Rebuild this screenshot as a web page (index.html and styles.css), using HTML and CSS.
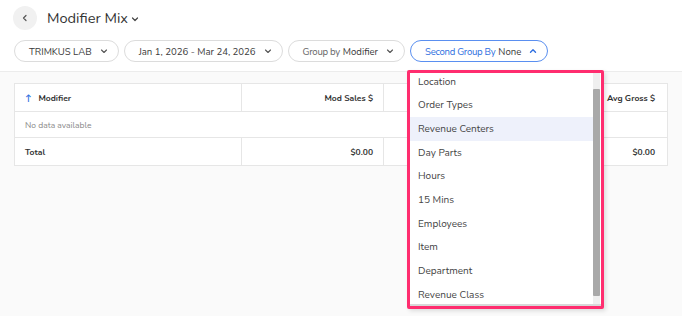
FILE: index.html
```html
<!DOCTYPE html>
<html>
<head>
<meta charset="utf-8">
<link rel="stylesheet" href="styles.css">
</head>
<body>
<header class="header">
  <div class="title-row">
    <button class="back"><svg width="8" height="8" viewBox="0 0 8 8"><path d="M5 1.5 L2.5 4 L5 6.5" fill="none" stroke="#555" stroke-width="1.2" stroke-linecap="round" stroke-linejoin="round"/></svg></button>
    <h1 class="title">Modifier Mix</h1>
    <svg class="title-chev" width="8" height="8" viewBox="0 0 8 8"><path d="M1.5 3 L4 5.5 L6.5 3" fill="none" stroke="#444" stroke-width="1.2" stroke-linecap="round" stroke-linejoin="round"/></svg>
  </div>
  <div class="filters">
    <div class="pill"><span class="val">TRIMKUS LAB</span><svg class="chev" width="8" height="8" viewBox="0 0 8 8"><path d="M1.5 3 L4 5.5 L6.5 3" fill="none" stroke="#555" stroke-width="1.1" stroke-linecap="round" stroke-linejoin="round"/></svg></div>
    <div class="pill"><span class="val">Jan 1, 2026 - Mar 24, 2026</span><svg class="chev" width="8" height="8" viewBox="0 0 8 8"><path d="M1.5 3 L4 5.5 L6.5 3" fill="none" stroke="#555" stroke-width="1.1" stroke-linecap="round" stroke-linejoin="round"/></svg></div>
    <div class="pill"><span class="lbl">Group by</span><span class="val">Modifier</span><svg class="chev" width="8" height="8" viewBox="0 0 8 8"><path d="M1.5 3 L4 5.5 L6.5 3" fill="none" stroke="#555" stroke-width="1.1" stroke-linecap="round" stroke-linejoin="round"/></svg></div>
    <div class="pill pill-active"><span class="lbl">Second Group By</span><span class="val">None</span><svg class="chev" width="8" height="8" viewBox="0 0 8 8"><path d="M1.5 5.3 L4 2.8 L6.5 5.3" fill="none" stroke="#2f6fe0" stroke-width="1.4" stroke-linecap="round" stroke-linejoin="round"/></svg></div>
  </div>
</header>
<main class="main">
  <div class="table">
    <div class="row head">
      <div class="cell c1"><span class="sort">↑</span>Modifier</div>
      <div class="cell num">Mod Sales $</div>
      <div class="cell num">Mod Qty</div>
      <div class="cell num last">Avg Gross $</div>
    </div>
    <div class="row empty">
      <div class="cell">No data available</div>
    </div>
    <div class="row total">
      <div class="cell c1">Total</div>
      <div class="cell num">$0.00</div>
      <div class="cell num">0</div>
      <div class="cell num last">$0.00</div>
    </div>
  </div>
</main>
<div class="dropdown">
  <div class="panel">
    <ul class="list">
      <li>Location</li>
      <li>Order Types</li>
      <li class="hl">Revenue Centers</li>
      <li>Day Parts</li>
      <li>Hours</li>
      <li>15 Mins</li>
      <li>Employees</li>
      <li>Item</li>
      <li>Department</li>
      <li>Revenue Class</li>
    </ul>
    <div class="scroll"><div class="thumb"></div></div>
  </div>
</div>
</body>
</html>
```
FILE: styles.css
```css
* { box-sizing: border-box; }
body {
  margin: 0;
  background: #fafafa;
  font-family: "Nunito", "Lato", "Open Sans", sans-serif;
  color: #333;
  width: 682px;
  height: 316px;
  overflow: hidden;
  position: relative;
}
.header {
  background: #fff;
  border-bottom: 1px solid #ececec;
  padding: 6px 14px 9px;
}
.title-row {
  display: flex;
  align-items: center;
  height: 24px;
}
.back {
  width: 24px;
  height: 24px;
  border-radius: 50%;
  border: none;
  background: #f1f1f1;
  padding: 0;
  display: flex;
  align-items: center;
  justify-content: center;
  margin-left: -1px;
}
.title {
  margin: 0 0 0 10px;
  font-size: 14.6px;
  font-weight: 400;
  color: #333;
  line-height: 24px;
}
.title-chev { margin-left: 3px; margin-top: 2px; }
.filters {
  display: flex;
  gap: 5px;
  margin-top: 10px;
}
.pill {
  height: 22px;
  border: 1px solid #dcdcdc;
  border-radius: 11px;
  display: flex;
  align-items: center;
  padding: 0 10px 0 14px;
  font-size: 9.6px;
  color: #444;
  background: #fff;
}
.pill .lbl { color: #666; margin-right: 3px; letter-spacing: -0.3px; }
.pill .val { color: #3a3a3a; }
.pill .chev { margin-left: 8px; }
.pill-active { border-color: #5a8ff0; }
.pill-active .lbl { color: #2f6fe0; }
.main { padding: 11px 14px; }
.table {
  background: #fff;
  border: 1px solid #e6e6e6;
  width: 654px;
}
.row {
  display: grid;
  grid-template-columns: 226px 142px 143px 1fr;
  border-bottom: 1px solid #e6e6e6;
}
.row:last-child { border-bottom: none; }
.cell {
  font-size: 8.5px;
  display: flex;
  align-items: center;
  padding: 0 10px;
  border-left: 1px solid #e6e6e6;
}
.cell.c1 { border-left: none; }
.cell.num { justify-content: flex-end; }
.cell.last { padding-right: 12px; }
.head { height: 28px; }
.head .cell { font-weight: 700; color: #333; }
.sort { color: #2f6fe0; margin-right: 7px; font-weight: 700; }
.empty { height: 26px; grid-template-columns: 1fr; }
.empty .cell { border-left: none; color: #888; }
.total { height: 27px; }
.total .cell { font-weight: 700; color: #333; }
.dropdown {
  position: absolute;
  left: 407px;
  top: 70px;
  width: 197px;
  height: 239px;
  border: 3px solid #ff2d6f;
  border-radius: 2px;
  background: #fff;
  box-shadow: 2px 2px 4px rgba(0,0,0,0.12);
  overflow: hidden;
}
.panel {
  display: flex;
  height: 100%;
  box-shadow: inset 0 -2px 0 #d8d8d8;
}
.list {
  list-style: none;
  margin: -3px 0 0 0;
  padding: 0;
  flex: 1;
}
.list li {
  height: 23.67px;
  display: flex;
  align-items: center;
  padding-left: 8px;
  font-size: 10px;
  color: #444;
}
.list li.hl { background: #eef1fb; }
.scroll {
  width: 7px;
  background: #efefef;
  margin-right: 1px;
  padding-top: 16px;
  height: 231px;
}
.thumb {
  height: 207px;
  background: #a9a9a9;
  border-radius: 1px;
}
```
